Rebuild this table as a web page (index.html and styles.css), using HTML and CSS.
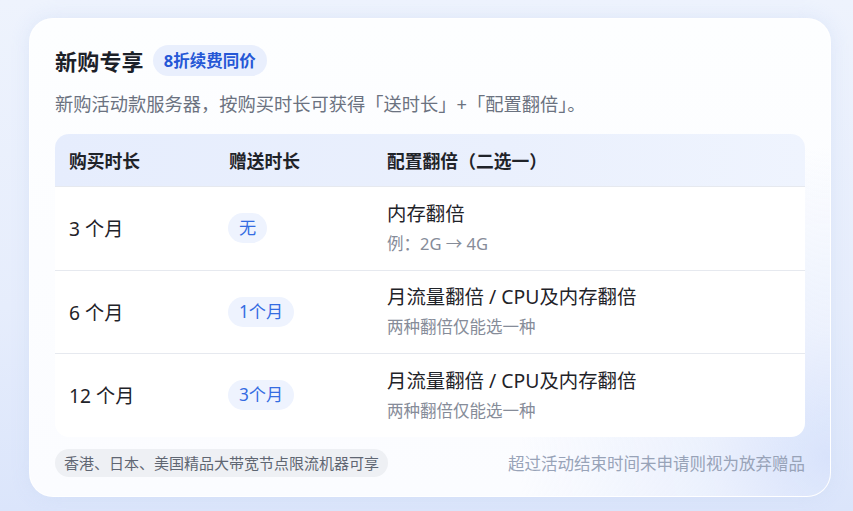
FILE: index.html
```html
<!DOCTYPE html>
<html lang="zh-CN">
<head>
<meta charset="utf-8">
<link rel="stylesheet" href="styles.css">
</head>
<body>
<div class="page">
  <section class="card">
    <div class="title-row">
      <h1 class="title">新购专享</h1>
      <span class="badge">8折续费同价</span>
    </div>
    <p class="subtitle">新购活动款服务器，按购买时长可获得「送时长」+「配置翻倍」。</p>
    <div class="table">
      <div class="thead">
        <div class="th">购买时长</div>
        <div class="th">赠送时长</div>
        <div class="th">配置翻倍（二选一）</div>
      </div>
      <div class="tr">
        <div class="td">3 个月</div>
        <div class="td"><span class="pill">无</span></div>
        <div class="td stack"><span class="main">内存翻倍</span><span class="sub">例：2G → 4G</span></div>
      </div>
      <div class="tr">
        <div class="td">6 个月</div>
        <div class="td"><span class="pill">1个月</span></div>
        <div class="td stack"><span class="main">月流量翻倍 / CPU及内存翻倍</span><span class="sub">两种翻倍仅能选一种</span></div>
      </div>
      <div class="tr">
        <div class="td">12 个月</div>
        <div class="td"><span class="pill">3个月</span></div>
        <div class="td stack"><span class="main">月流量翻倍 / CPU及内存翻倍</span><span class="sub">两种翻倍仅能选一种</span></div>
      </div>
    </div>
    <div class="footer">
      <span class="note">香港、日本、美国精品大带宽节点限流机器可享</span>
      <span class="hint">超过活动结束时间未申请则视为放弃赠品</span>
    </div>
  </section>
</div>
</body>
</html>
```

FILE: styles.css
```css
* { box-sizing: border-box; margin: 0; padding: 0; }
html, body { width: 853px; height: 511px; overflow: hidden; }
body {
  font-family: "Noto Sans", "Noto Sans CJK SC", sans-serif;
  background: linear-gradient(180deg, #eef3fd 0%, #e6edfc 60%, #dbe5fb 100%);
  color: #1f2430;
}
.page {
  padding: 18px 22px 14px 29px;
  height: 511px;
}
.card {
  width: 802px;
  height: 479px;
  border-radius: 24px;
  padding: 25px 25px 0 25px;
  background:
    radial-gradient(circle at 100% 92%, rgba(214,225,251,0.95) 0%, rgba(226,234,252,0.6) 14%, rgba(255,255,255,0) 34%),
    linear-gradient(180deg, #fdfeff 0%, #fbfcff 100%);
  border: 1.5px solid rgba(255,255,255,0.95);
  box-shadow: 0 0 18px rgba(200,214,245,0.45);
}
.title-row {
  display: flex;
  align-items: center;
  gap: 9px;
  height: 32px;
}
.title {
  font-size: 22px;
  font-weight: 700;
  color: #1d2129;
  letter-spacing: 0.2px;
}
.badge {
  height: 31px;
  line-height: 31px;
  padding: 0 11px;
  border-radius: 16px;
  background: #e9effd;
  color: #2557d6;
  font-size: 16.5px;
  font-weight: 700;
}
.subtitle {
  margin-top: 15px;
  font-size: 18.25px;
  line-height: 26px;
  color: #6b7280;
}
.table {
  margin-top: 17px;
  background: #fff;
  border-radius: 14px;
  overflow: hidden;
}
.thead, .tr {
  display: grid;
  grid-template-columns: 160px 158px 1fr;
}
.thead {
  height: 52px;
  align-items: center;
  background: linear-gradient(90deg, #e6edfd 0%, #eaf0fd 60%, #eff4fe 100%);
}
.th {
  padding-left: 14px;
  font-size: 17.8px;
  font-weight: 700;
  color: #1f2329;
}
.tr {
  height: 83.5px;
  align-items: center;
  border-top: 1px solid #e6e9ef;
}
.tr:first-of-type { border-top: none; }
.td {
  padding-left: 14px;
  font-size: 19.2px;
  color: #1f2329;
}
.td:nth-child(2) { padding-left: 13px; }
.pill {
  display: inline-block;
  height: 30px;
  line-height: 30px;
  padding: 0 11px;
  border-radius: 15px;
  background: #eef3fe;
  color: #346ce2;
  font-size: 17.2px;
}
.stack {
  display: flex;
  flex-direction: column;
  gap: 5px;
}
.main { font-size: 19.4px; line-height: 26px; color: #1f2329; }
.sub { font-size: 16.5px; line-height: 24px; color: #868c99; }
.footer {
  margin-top: 12px;
  display: flex;
  justify-content: space-between;
  align-items: center;
}
.note {
  height: 28px;
  line-height: 28px;
  padding: 0 9px;
  border-radius: 14px;
  background: #eef0f4;
  color: #5f6672;
  font-size: 15px;
}
.hint {
  font-size: 16.5px;
  color: #98a3b8;
}
```
